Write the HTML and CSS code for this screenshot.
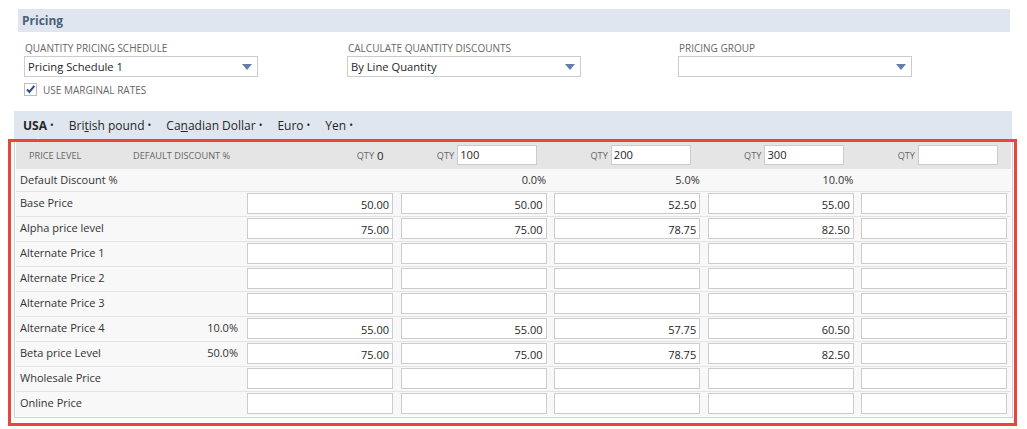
FILE: index.html
```html
<!DOCTYPE html>
<html>
<head>
<meta charset="utf-8">
<title>Pricing</title>
<link rel="stylesheet" href="styles.css">
</head>
<body>
<div class="page">
  <div class="section-head">Pricing</div>

  <div class="fields">
    <div class="field f1">
      <div class="flabel">Quantity Pricing Schedule</div>
      <div class="select"><span class="sval">Pricing Schedule 1</span><i class="arrow"></i></div>
      <div class="check">
        <span class="box"><svg width="13" height="13" viewBox="0 0 13 13"><path d="M2.3 6.3 L5.2 9.4 L11 2.2" fill="none" stroke="#2c4d80" stroke-width="2.4"/></svg></span>
        <span class="clabel">Use Marginal Rates</span>
      </div>
    </div>
    <div class="field f2">
      <div class="flabel">Calculate Quantity Discounts</div>
      <div class="select"><span class="sval">By Line Quantity</span><i class="arrow"></i></div>
    </div>
    <div class="field f3">
      <div class="flabel">Pricing Group</div>
      <div class="select"><span class="sval"></span><i class="arrow"></i></div>
    </div>
  </div>

  <div class="tabs">
    <span class="tab active">USA<b class="dot">•</b></span>
    <span class="tab">Bri<u>t</u>ish pound<b class="dot">•</b></span>
    <span class="tab">Ca<u>n</u>adian Dollar<b class="dot">•</b></span>
    <span class="tab">Euro<b class="dot">•</b></span>
    <span class="tab">Yen<b class="dot">•</b></span>
  </div>

  <div class="grid-wrap">
    <div class="row head">
      <div class="hcell hl">Price Level</div>
      <div class="hcell hd">Default Discount %</div>
      <div class="hcell hq"><span class="qty">QTY</span><span class="qv">0</span></div>
      <div class="hcell hq"><span class="qty">QTY</span><span class="qin">100</span></div>
      <div class="hcell hq"><span class="qty">QTY</span><span class="qin">200</span></div>
      <div class="hcell hq"><span class="qty">QTY</span><span class="qin">300</span></div>
      <div class="hcell hq"><span class="qty">QTY</span><span class="qin"></span></div>
    </div>
    <div class="row disc">
      <div class="lbl">Default Discount %</div>
      <div class="dv"></div>
      <div class="pct"></div>
      <div class="pct">0.0%</div>
      <div class="pct">5.0%</div>
      <div class="pct">10.0%</div>
      <div class="pct"></div>
    </div>
    <div class="row">
      <div class="lbl">Base Price</div><div class="dv"></div>
      <div class="cell"><span class="inp">50.00</span></div>
      <div class="cell"><span class="inp">50.00</span></div>
      <div class="cell"><span class="inp">52.50</span></div>
      <div class="cell"><span class="inp">55.00</span></div>
      <div class="cell"><span class="inp"></span></div>
    </div>
    <div class="row">
      <div class="lbl">Alpha price level</div><div class="dv"></div>
      <div class="cell"><span class="inp">75.00</span></div>
      <div class="cell"><span class="inp">75.00</span></div>
      <div class="cell"><span class="inp">78.75</span></div>
      <div class="cell"><span class="inp">82.50</span></div>
      <div class="cell"><span class="inp"></span></div>
    </div>
    <div class="row">
      <div class="lbl">Alternate Price 1</div><div class="dv"></div>
      <div class="cell"><span class="inp"></span></div>
      <div class="cell"><span class="inp"></span></div>
      <div class="cell"><span class="inp"></span></div>
      <div class="cell"><span class="inp"></span></div>
      <div class="cell"><span class="inp"></span></div>
    </div>
    <div class="row">
      <div class="lbl">Alternate Price 2</div><div class="dv"></div>
      <div class="cell"><span class="inp"></span></div>
      <div class="cell"><span class="inp"></span></div>
      <div class="cell"><span class="inp"></span></div>
      <div class="cell"><span class="inp"></span></div>
      <div class="cell"><span class="inp"></span></div>
    </div>
    <div class="row">
      <div class="lbl">Alternate Price 3</div><div class="dv"></div>
      <div class="cell"><span class="inp"></span></div>
      <div class="cell"><span class="inp"></span></div>
      <div class="cell"><span class="inp"></span></div>
      <div class="cell"><span class="inp"></span></div>
      <div class="cell"><span class="inp"></span></div>
    </div>
    <div class="row">
      <div class="lbl">Alternate Price 4</div><div class="dv">10.0%</div>
      <div class="cell"><span class="inp">55.00</span></div>
      <div class="cell"><span class="inp">55.00</span></div>
      <div class="cell"><span class="inp">57.75</span></div>
      <div class="cell"><span class="inp">60.50</span></div>
      <div class="cell"><span class="inp"></span></div>
    </div>
    <div class="row">
      <div class="lbl">Beta price Level</div><div class="dv">50.0%</div>
      <div class="cell"><span class="inp">75.00</span></div>
      <div class="cell"><span class="inp">75.00</span></div>
      <div class="cell"><span class="inp">78.75</span></div>
      <div class="cell"><span class="inp">82.50</span></div>
      <div class="cell"><span class="inp"></span></div>
    </div>
    <div class="row">
      <div class="lbl">Wholesale Price</div><div class="dv"></div>
      <div class="cell"><span class="inp"></span></div>
      <div class="cell"><span class="inp"></span></div>
      <div class="cell"><span class="inp"></span></div>
      <div class="cell"><span class="inp"></span></div>
      <div class="cell"><span class="inp"></span></div>
    </div>
    <div class="row last">
      <div class="lbl">Online Price</div><div class="dv"></div>
      <div class="cell"><span class="inp"></span></div>
      <div class="cell"><span class="inp"></span></div>
      <div class="cell"><span class="inp"></span></div>
      <div class="cell"><span class="inp"></span></div>
      <div class="cell"><span class="inp"></span></div>
    </div>
  </div>
</div>
</body>
</html>
```

FILE: styles.css
```css
* { box-sizing: border-box; }
html, body { margin: 0; padding: 0; background: #fff; }
body {
  font-family: "Open Sans", "Liberation Sans", sans-serif;
  color: #262626;
  width: 1027px;
  height: 429px;
  overflow: hidden;
}
.page { padding-top: 9px; }

.section-head {
  margin: 0 17px 0 18px;
  height: 23px;
  line-height: 23px;
  background: #e0e6ef;
  padding-left: 4px;
  font-size: 12px;
  font-weight: 700;
  color: #4d5f79;
}

.fields {
  display: flex;
  padding: 9px 0 0 24px;
  height: 79px;
}
.field { display: flex; flex-direction: column; }
.f1 { width: 323px; }
.f2 { width: 331px; }
.f3 { width: 240px; }
.flabel {
  font-size: 10px;
  line-height: 14px;
  text-transform: uppercase;
  color: #666;
  padding-left: 1px;
  height: 15px;
}
.select {
  width: 234px;
  height: 21px;
  border: 1px solid #ccc;
  background: #fff;
  display: flex;
  align-items: center;
  justify-content: space-between;
  padding: 0 5px 0 3px;
}
.sval { font-size: 11.2px; color: #262626; }
.arrow {
  width: 0; height: 0;
  border-left: 5.5px solid transparent;
  border-right: 5.5px solid transparent;
  border-top: 6px solid #627fa8;
}
.check {
  display: flex;
  align-items: center;
  margin-top: 5px;
  height: 14px;
}
.box {
  width: 13px; height: 13px;
  border: 1px solid #bdbdbd;
  background: #fff;
  display: flex;
  align-items: center;
  justify-content: center;
}
.box svg { display: block; }
.clabel {
  font-size: 10px;
  text-transform: uppercase;
  color: #666;
  margin-left: 6px;
  padding-top: 2px;
}

.tabs {
  position: relative;
  margin: 0 15px 0 14px;
  height: 28px;
  background: #e0e6ef;
  display: flex;
  align-items: center;
  padding-left: 9px;
  font-size: 12px;
  color: #262626;
}
.tab { margin-right: 15px; }
.tab u { text-decoration: underline; }
.tab.active { font-weight: 700; position: relative; }
.tab.active::after {
  content: "";
  position: absolute;
  left: 8px;
  bottom: -9px;
  border-left: 7px solid transparent;
  border-right: 7px solid transparent;
  border-bottom: 5px solid #fff;
}
.dot { font-weight: 400; font-size: 10px; margin-left: 3px; vertical-align: 1px; }

.grid-wrap {
  position: relative;
  margin: 0 14px;
  border: 1px solid #d0d0d0;
  padding: 1px;
  background: #fff;
}
.grid-wrap::after {
  content: "";
  position: absolute;
  left: -7px;
  right: -5px;
  top: -1px;
  bottom: -9px;
  border: 3px solid #e8453c;
  pointer-events: none;
}

.row {
  display: grid;
  grid-template-columns: 117px 110px repeat(5, 1fr);
  background: #f8f8f8;
  border-bottom: 1px solid #e3e3e3;
  height: 25px;
  padding-top: 1px;
}
.row.last { border-bottom: none; height: 24px; }
.row.head {
  background: #e5e5e5;
  height: 28px;
  border-bottom: none;
  align-items: center;
  padding-top: 0;
}
.row.disc { height: 23px; }
.hcell {
  font-size: 9.2px;
  text-transform: uppercase;
  color: #666;
}
.hl { padding-left: 13px; }
.hd { padding-left: 0; }
.hq {
  display: flex;
  justify-content: flex-end;
  align-items: center;
  padding-right: 13px;
}
.qty { font-size: 9.2px; color: #666; margin-right: 3px; }
.qv { font-size: 11.5px; color: #262626; }
.qin {
  width: 80px;
  height: 20px;
  border: 1px solid #ccc;
  background: #fff;
  font-size: 11.2px;
  color: #262626;
  line-height: 18px;
  padding-left: 2px;
}
.lbl {
  font-size: 11px;
  color: #333;
  padding-left: 4px;
  padding-top: 2px;
  line-height: 16px;
  white-space: nowrap;
}
.dv {
  font-size: 11px;
  color: #333;
  text-align: right;
  padding-right: 5px;
  padding-top: 2px;
  line-height: 16px;
}
.pct {
  font-size: 11px;
  color: #333;
  text-align: right;
  padding-right: 4px;
  padding-top: 2px;
  line-height: 16px;
}
.cell { padding-left: 4px; }
.inp {
  display: block;
  width: 146px;
  height: 21px;
  border: 1px solid #ccc;
  background: #fff;
  text-align: right;
  padding-right: 3px;
  font-size: 11px;
  line-height: 21px;
  color: #262626;
}
```
